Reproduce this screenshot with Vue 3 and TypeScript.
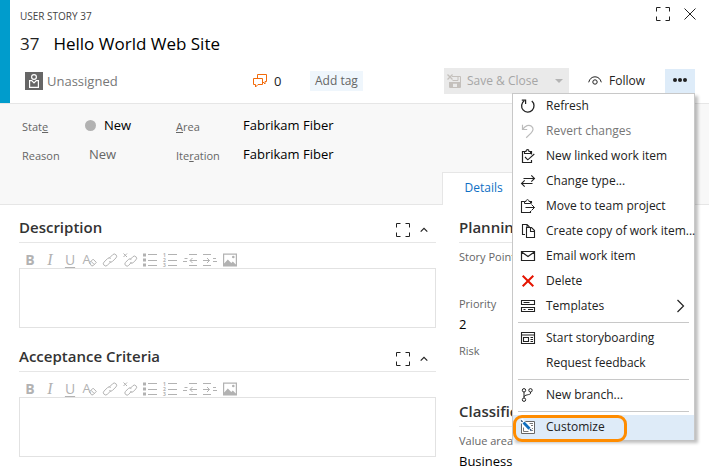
<script setup lang="ts">
import { ref } from 'vue'

interface MenuItem {
  label: string
  icon?: string
  disabled?: boolean
  submenu?: boolean
  active?: boolean
}

const icons: Record<string, string> = {
  fullscreen: '<path d="M.5 4.500v-4h4M9.500.5h4v4M13.500 9.500v4h-4M4.500 13.500h-4v-4"/>',
  close: '<path d="M1.500 1.500l11 11M12.500 1.500l-11 11"/>',
  comments: '<path d="M4.500 4V.5h9v7h-1.500v2.500l-2-2"/><path d="M.5 4.500h9v6H5l-2.500 2.500v-2.500h-2z"/>',
  save: '<path d="M5 2.500h8.500v11h-11V8M5.500 13v-4h5v4M5.500 6.500h5.500V3"/><path d="M3 8h10v5.500h-2V9.500H6v4H3z" fill="currentColor" stroke="none"/><path d="M.5.500l5 5M5.500.5l-5 5" stroke-width="1.300"/>',
  eye: '<path d="M.7 8.300C1.600 4.700 4 2.800 7 2.800s5.400 1.900 6.300 5.500"/><circle cx="7" cy="8" r="2.200"/>',
  refresh: '<path d="M3.200 1.800A6.200 6.200 0 1 0 10.800 2.100" stroke-width="1.300"/><path d="M.8 1.200h3.800v3.800" stroke-width="1.200"/>',
  undo: '<path d="M1.500.8v4.700h4.700M1.800 5.200C4.300 1.600 7.800.2 10.500 2.200c2.700 2.200 1.500 4.900-.5 6.900L5.200 13.700" stroke-width="1.200"/>',
  linked: '<path d="M10.500 5.500v-3h-2M3.500 2.500h-2v11h9V11" stroke-width="1.200"/><path d="M3.500 4.500V2.500h1.500c0-2.500 3-2.500 3 0h1.500v2zM4 8l2.800 2.800L13.300 5" stroke-width="1.100"/>',
  change: '<path d="M2.500 4.500h11M10.300 1.300l3.200 3.200-3.200 3.200M11.500 9.500H.5M3.700 6.300L.5 9.500l3.200 3.200" stroke-width="1.100"/>',
  move: '<path d="M10.500 4.500v-2h-2M3.500 2.500H.5v11h9V12" stroke-width="1.100"/><path d="M3.500 4.500v-2H5c0-2.500 3-2.500 3 0h1.500v2zM4.500 8.500h9M10.500 5.500l3 3-3 3"/>',
  copy: '<path d="M4 10.500H1.500V.5h4.500l2.500 2.500M6 .5v3" stroke-width="1.100"/><path d="M5.500 3.500h5l3 3v7h-8zM9.500 3.500v4h4" stroke-width="1.100"/>',
  mail: '<path d="M.5 2.500h13v9H.5zM.7 3L7 7.500 13.300 3" stroke-width="1.200"/>',
  remove: '<path d="M1.700 1.700l10.600 10.600M12.300 1.700L1.700 12.300" stroke="#e51400" stroke-width="2"/>',
  templates: '<path d="M.5 1.500h13v4H.5zM.5 8.500h13v4H.5zM2.500 3.500h6M2.500 10.500h2M7 10.500h5" stroke-width="1.100"/>',
  storyboard: '<path d="M.5 1.500h13v11H.5zM.5 4h13M2.500 6.500h5v4h-5zM9.500 6.500h2.500M9.500 8.500h2.500M9.500 10.500h2.500" stroke-width="1.100"/>',
  branch: '<circle cx="3" cy="2.300" r="1.700"/><circle cx="9.500" cy="2.300" r="1.700"/><circle cx="3" cy="11.700" r="1.700"/><path d="M3 4v6M9.500 4v1.500c0 1.500-6.500 1-6.500 3.500"/>',
  customize: '<path d="M.5 1.500h13v12H.5z" fill="#fff" stroke="#666"/><path d="M8.500 3.500H12M10 5.500h2M10.500 8.500H12M10.500 10.500H12M2.500 7.500v4h5" stroke="#777"/><path d="M0 0l10.500 11" stroke="#fff" stroke-width="4"/><path d="M2.500 2.500l6 6.200" stroke="#106ebe" stroke-width="2.800"/><path d="M0 .5l1.600 1.300M9 9.200l1.500 1.500" stroke="#1e3f66" stroke-width="1.300"/>',
  chevron: '<path d="M4.500 1l6 6-6 6" stroke-width="1.200"/>',
  up: '<path d="M3.700 8.700L7 5.400l3.300 3.300" stroke-width="1.200"/>',
  clear: '<text x="-.5" y="11" font-size="13" fill="currentColor" stroke="none">A</text><path d="M6.500 9.800l3.600-3.600 3.200 3.200-3.300 3.400H8.500zM8 8.300l3.300 3.300"/>',
  link: '<path d="M6 5.400l3.600-3.600a2.200 2.200 0 0 1 3.400 3.100L9.400 8.500a2.200 2.200 0 0 1-3.100 0"/><path d="M8 8.600l-3.600 3.600A2.200 2.200 0 0 1 1 9.100l3.600-3.600a2.200 2.200 0 0 1 3.100 0"/>',
  unlink: '<path d="M7 6.600l2.800-2.800a2.100 2.100 0 0 1 3.200 3L10.200 9.600a2 2 0 0 1-2.900 0"/><path d="M8.500 9.200l-2.800 3.200a2.100 2.100 0 0 1-3.200-3l2.900-2.900a2 2 0 0 1 2.900 0M.5.500L4 4M4 .5L.5 4"/>',
  bullets: '<path d="M0 .5h3v3H0zM0 5.500h3v3H0zM0 10.500h3v3H0z" fill="currentColor" stroke="none"/><path d="M5 1.500h9M5 7.500h9M5 12.500h9"/>',
  numbers: '<path d="M5 1.500h9M5 7.500h9M5 12.500h9"/><g font-size="5" font-weight="700" fill="currentColor" stroke="none"><text x="0" y="4">1</text><text x="0" y="9">2</text><text x="0" y="14">3</text></g>',
  outdent: '<path d="M6 1.500h8M6 12.500h8M1.500 5.500h3M0 8.500h4M7 7.500h7M9.500 5L7 7.500l2.500 2.500"/>',
  indent: '<path d="M0 1.500h8M0 12.500h8M10 5.500h3M10 8.500h4M0 7.500h6.500M4 5l2.500 2.500L4 10"/>',
  image: '<path d="M0 .5h14v13H0zM1.200 1.700v8.800l3.600-4 3.500 3.500 1.500-1.500 3 3V1.700z" fill="currentColor" fill-rule="evenodd" stroke="none"/><circle cx="10.300" cy="4" r="1.300" fill="currentColor" stroke="none"/>',
  person: '<path d="M0 0h18v18H0z" fill="#666" stroke="none"/><g stroke="#fff" stroke-width="1.200"><circle cx="9" cy="5" r="2.400"/><path d="M6.700 8.700H4.600v6.600h8.800V8.700h-2.100L9 11z"/></g>',
}

const groups: MenuItem[][] = [
  [
    { label: 'Refresh', icon: 'refresh' },
    { label: 'Revert changes', icon: 'undo', disabled: true },
    { label: 'New linked work item', icon: 'linked' },
    { label: 'Change type...', icon: 'change' },
    { label: 'Move to team project', icon: 'move' },
    { label: 'Create copy of work item...', icon: 'copy' },
    { label: 'Email work item', icon: 'mail' },
    { label: 'Delete', icon: 'remove' },
    { label: 'Templates', icon: 'templates', submenu: true },
  ],
  [{ label: 'Start storyboarding', icon: 'storyboard' }, { label: 'Request feedback' }],
  [{ label: 'New branch...', icon: 'branch' }],
  [{ label: 'Customize', icon: 'customize', active: true }],
]

const tools = ['clear', 'link', 'unlink', 'bullets', 'numbers', 'outdent', 'indent', 'image']

const title = ref('Hello World Web Site')
const state = ref('New')
const reason = ref('New')
const area = ref('Fabrikam Fiber')
const iteration = ref('Fabrikam Fiber')
const points = ref('')
const priority = ref('2')
const risk = ref('')
const valueArea = ref('Business')
const editors = ref([
  { id: 'description', name: 'Description', text: '' },
  { id: 'criteria', name: 'Acceptance Criteria', text: '' },
])
const menuOpen = ref(true)
</script>

<template>
  <main class="form">
    <header class="head">
      <div class="top">
        <span class="kind">USER STORY 37</span>
        <button class="plain" aria-label="Full screen"><svg class="ic" viewBox="0 0 14 14" v-html="icons.fullscreen" /></button>
        <button class="plain" aria-label="Close"><svg class="ic" viewBox="0 0 14 14" v-html="icons.close" /></button>
      </div>
      <div class="title">
        <label for="title">37</label>
        <input id="title" v-model="title" />
      </div>
      <div class="bar">
        <button class="assignee"><svg class="avatar" viewBox="0 0 18 18" v-html="icons.person" />Unassigned</button>
        <a class="comments" href="#"><svg class="ic" viewBox="0 0 14 14" v-html="icons.comments" />0</a>
        <button class="tag">Add tag</button>
        <button class="save" disabled>
          <svg class="ic" viewBox="0 0 14 14" v-html="icons.save" /><span>Save &amp; Close</span><i class="caret" />
        </button>
        <button class="follow"><svg class="ic" viewBox="0 0 14 14" v-html="icons.eye" />Follow</button>
        <div class="more">
          <button class="dots" aria-label="Actions" @click="menuOpen = !menuOpen"><i /><i /><i /></button>
          <div v-if="menuOpen" class="menu" role="menu">
            <div v-for="(group, g) in groups" :key="g" class="group" role="group">
              <button
                v-for="item in group"
                :key="item.label"
                class="item"
                :class="{ active: item.active }"
                :disabled="item.disabled"
                role="menuitem"
              >
                <svg class="ic" viewBox="0 0 14 14" v-html="item.icon ? icons[item.icon] : ''" />
                <span>{{ item.label }}</span>
                <svg v-if="item.submenu" class="ic" viewBox="0 0 14 14" v-html="icons.chevron" />
              </button>
            </div>
          </div>
        </div>
      </div>
    </header>

    <section class="meta">
      <div class="fields">
        <label for="state">Stat<u>e</u></label>
        <div class="state"><i class="dot" /><input id="state" v-model="state" /></div>
        <label for="area"><u>A</u>rea</label>
        <input id="area" v-model="area" />
        <label for="reason">Reason</label>
        <input id="reason" v-model="reason" class="reason" />
        <label for="iteration">Ite<u>r</u>ation</label>
        <input id="iteration" v-model="iteration" />
      </div>
      <nav class="tabs"><a class="tab" href="#">Details</a></nav>
    </section>

    <div class="body">
      <div class="main">
        <section v-for="e in editors" :key="e.id" class="editor">
          <div class="heading">
            <h2><label :for="e.id">{{ e.name }}</label></h2>
            <button class="plain" aria-label="Maximize"><svg class="ic" viewBox="0 0 14 14" v-html="icons.fullscreen" /></button>
            <button class="plain" aria-label="Collapse"><svg class="ic" viewBox="0 0 14 14" v-html="icons.up" /></button>
          </div>
          <div class="tools">
            <button class="plain bold">B</button>
            <button class="plain italic">I</button>
            <button class="plain under">U</button>
            <button v-for="t in tools" :key="t" class="plain" :aria-label="t">
              <svg class="ic" viewBox="0 0 14 14" v-html="icons[t]" />
            </button>
          </div>
          <textarea :id="e.id" v-model="e.text" />
        </section>
      </div>
      <aside class="side">
        <section>
          <div class="heading"><h2>Planning</h2></div>
          <div class="field"><label for="points">Story Points</label><input id="points" v-model="points" /></div>
          <div class="field"><label for="priority">Priority</label><input id="priority" v-model="priority" /></div>
          <div class="field"><label for="risk">Risk</label><input id="risk" v-model="risk" /></div>
        </section>
        <section>
          <div class="heading"><h2>Classification</h2></div>
          <div class="field"><label for="value">Value area</label><input id="value" v-model="valueArea" /></div>
        </section>
      </aside>
    </div>
  </main>
</template>

<style>
body {
  margin: 0;
  background: #fff;
}
</style>

<style scoped>
* {
  box-sizing: border-box;
}
.form {
  font: 12px/16px "Open Sans", "Noto Sans", sans-serif;
  color: #222;
}
button,
input,
textarea {
  font: inherit;
  color: inherit;
  border: 0;
  padding: 0;
  margin: 0;
  background: none;
  outline: none;
}
input {
  min-width: 0;
  width: 100%;
  height: 18px;
  font-size: 13px;
  color: #000;
}
a {
  color: inherit;
  text-decoration: none;
}
.ic {
  display: block;
  flex: none;
  width: 14px;
  height: 14px;
  fill: none;
  stroke: currentColor;
  overflow: visible;
}
.plain {
  flex: none;
  width: 14px;
  height: 14px;
}
.head {
  border-left: 10px solid #009ccc;
  padding: 7px 12px 9px 10px;
  height: 103px;
}
.top {
  display: flex;
  gap: 13px;
  height: 18px;
}
.kind {
  flex: 1;
  font-size: 10px;
  line-height: 18px;
  color: #444;
}
.title {
  display: flex;
  gap: 14px;
  margin-top: 6px;
  height: 26px;
  font-size: 17px;
  line-height: 26px;
}
.title input {
  height: 26px;
  font-size: 17px;
}
.bar {
  display: flex;
  align-items: center;
  height: 26px;
  margin-top: 11px;
  padding-right: 2px;
}
.assignee {
  display: flex;
  align-items: center;
  gap: 4px;
  width: 228px;
  padding-left: 5px;
  font-size: 13px;
  color: #777;
}
.avatar {
  width: 18px;
  height: 18px;
  fill: none;
}
.comments {
  display: flex;
  align-items: center;
  gap: 7px;
  width: 57px;
  padding-left: 5px;
  font-size: 13px;
}
.comments .ic {
  color: #f26a0a;
}
.tag {
  height: 20px;
  padding: 0 5px;
  margin-left: 5px;
  background: #eff6fc;
  color: #666;
}
.save {
  display: flex;
  align-items: center;
  gap: 6px;
  width: 125px;
  height: 26px;
  padding: 0 6px 0 3px;
  margin-left: auto;
  background: #eaeaea;
  color: #a6a6a6;
  text-align: left;
}
.save .ic {
  color: #c4c0bc;
}
.save span {
  flex: 1;
}
.caret {
  border: 4px solid transparent;
  border-top-color: #b4b4b4;
  border-bottom: 0;
}
.follow {
  display: flex;
  align-items: center;
  gap: 7px;
  width: 77px;
  margin-left: 19px;
}
.more {
  position: relative;
}
.dots {
  display: flex;
  align-items: center;
  justify-content: center;
  gap: 1px;
  width: 30px;
  height: 24px;
  padding-bottom: 3px;
  background: #deecf9;
}
.dots i {
  width: 4px;
  height: 4px;
  border-radius: 2px;
  background: #222;
}
.menu {
  position: absolute;
  z-index: 2;
  top: 24px;
  right: 0;
  width: 183px;
  border: 1px solid #c8c8c8;
  border-bottom: 0;
  background: #fff;
  box-shadow: 3px 3px 3px rgba(0, 0, 0, 0.25);
}
.group + .group::before {
  content: "";
  display: block;
  height: 1px;
  margin: 3px 5px;
  background: #c8c8c8;
}
.item {
  position: relative;
  display: flex;
  align-items: center;
  width: 100%;
  height: 25px;
  padding: 0 7px 1px 8px;
  gap: 11px;
  text-align: left;
  white-space: nowrap;
}
.item span {
  flex: 1;
  min-width: 0;
}
.item:disabled {
  color: #767676;
}
.item:disabled .ic {
  color: #bbb;
}
.active {
  background: #deebf8;
}
.active::after {
  content: "";
  position: absolute;
  inset: 0 67px -2px 0;
  border: 3px solid #ff8c00;
  border-radius: 9px;
}
.meta {
  border-top: 1px solid #e6e6e6;
  background: #f8f8f8;
}
.fields {
  display: grid;
  grid-template-columns: 63px 91px 67px minmax(0, 1fr);
  align-content: start;
  row-gap: 8px;
  padding: 11px 22px 0;
  height: 68px;
}
.fields label {
  padding-top: 3px;
  font-size: 11px;
  line-height: 18px;
  color: #666;
}
.fields input {
  height: 20px;
}
.fields .reason {
  padding-left: 4px;
  color: #666;
}
.state {
  display: flex;
  align-items: center;
  gap: 8px;
  height: 20px;
}
.dot {
  flex: none;
  width: 11px;
  height: 11px;
  border-radius: 6px;
  background: #b2b2b2;
}
.tabs {
  display: flex;
  height: 33px;
}
.tabs::before,
.tabs::after {
  content: "";
  border-bottom: 1px solid #e6e6e6;
  flex: 1;
}
.tabs::before {
  flex: 0 0 auto;
  width: calc(62% + 2px);
}
.tab {
  padding: 0 22px;
  border: 1px solid #e6e6e6;
  border-bottom: 0;
  background: #fff;
  color: #0e6fc4;
  font-size: 12px;
  line-height: 30px;
}
.body {
  display: grid;
  grid-template-columns: minmax(0, 417fr) minmax(0, 227fr);
  gap: 23px;
  padding: 10px 23px 0 19px;
}
.heading {
  display: flex;
  align-items: center;
  gap: 7px;
  height: 28px;
  padding: 0 5px 3px 0;
  border-bottom: 1px solid #e6e6e6;
}
.heading .plain {
  padding-top: 3px;
}
h2 {
  flex: 1;
  margin: 0;
  font-size: 15px;
  line-height: 24px;
  font-weight: 600;
  color: #333;
}
.tools {
  display: flex;
  gap: 6px;
  padding: 10px 4px 1px;
  height: 25px;
  color: #b2b2b2;
}
.tools .plain {
  font-size: 14px;
  line-height: 14px;
}
.tools .bold {
  font-weight: 700;
}
.tools .italic {
  font-family: "Liberation Serif", serif;
  font-size: 16px;
  font-style: italic;
}
.tools .under {
  text-decoration: underline;
  text-underline-offset: 2px;
}
textarea {
  display: block;
  width: 100%;
  height: 60px;
  border: 1px solid #e2e2e2;
  resize: none;
}
.editor {
  padding-bottom: 16px;
}
.side .field {
  height: 47px;
  padding-top: 5px;
}
.side .field label {
  display: block;
  line-height: 18px;
  font-size: 11px;
  color: #666;
}
.side .field input {
  display: block;
  height: 22px;
}
.side section {
  padding-bottom: 15px;
}
.side section + section {
  padding-bottom: 0;
}
</style>
